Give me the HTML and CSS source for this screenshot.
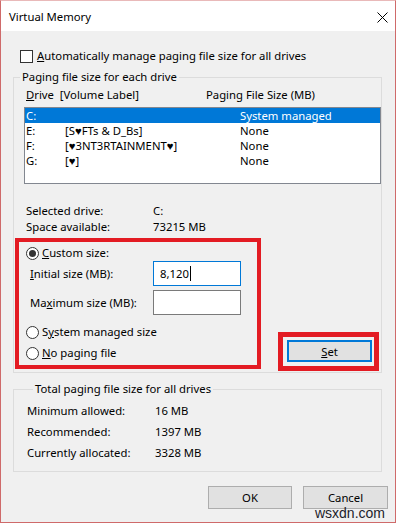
FILE: index.html
```html
<!DOCTYPE html>
<html>
<head>
<meta charset="UTF-8">
<title>Virtual Memory</title>
<link rel="stylesheet" href="styles.css">
</head>
<body>
<div class="window">
  <div class="titlebar">
    <span class="title">Virtual Memory</span>
    <svg class="close" width="11" height="11" viewBox="0 0 11 11">
      <path d="M0.5 0.5 L10.5 10.5 M10.5 0.5 L0.5 10.5" stroke="#000" stroke-width="1"/>
    </svg>
  </div>

  <div class="content">
    <div class="auto-row">
      <span class="checkbox"></span>
      <span><u>A</u>utomatically manage paging file size for all drives</span>
    </div>

    <fieldset class="group group-drives">
      <legend>Paging file size for each drive</legend>
      <div class="list-head">
        <span class="col-drive"><u>D</u>rive&nbsp; [Volume Label]</span>
        <span class="col-size">Paging File Size (MB)</span>
      </div>
      <div class="listbox">
        <div class="list-row selected"><span class="c1">C:</span><span class="c3">System managed</span></div>
        <div class="list-row"><span class="c1">E:</span><span class="c2">[S♥FTs &amp; D_Bs]</span><span class="c3">None</span></div>
        <div class="list-row"><span class="c1">F:</span><span class="c2">[♥3NT3RTAINMENT♥]</span><span class="c3">None</span></div>
        <div class="list-row"><span class="c1">G:</span><span class="c2">[♥]</span><span class="c3">None</span></div>
      </div>

      <div class="info">
        <div class="info-row"><span class="info-label">Selected drive:</span><span>C:</span></div>
        <div class="info-row"><span class="info-label">Space available:</span><span>73215 MB</span></div>
      </div>

      <div class="size-area">
        <div class="mark mark-sizes">
          <div class="radio-row"><span class="radio checked"></span><span><u>C</u>ustom size:</span></div>
          <div class="field-row">
            <span class="field-label"><u>I</u>nitial size (MB):</span>
            <span class="textbox focused">8,120<span class="caret"></span></span>
          </div>
          <div class="field-row">
            <span class="field-label">Ma<u>x</u>imum size (MB):</span>
            <span class="textbox"></span>
          </div>
          <div class="radio-row spaced"><span class="radio"></span><span>S<u>y</u>stem managed size</span></div>
          <div class="radio-row last"><span class="radio"></span><span><u>N</u>o paging file</span></div>
        </div>
        <div class="mark mark-set">
          <button class="btn btn-default"><u>S</u>et</button>
        </div>
      </div>
    </fieldset>

    <fieldset class="group group-total">
      <legend>Total paging file size for all drives</legend>
      <div class="total-row"><span class="total-label">Minimum allowed:</span><span>16 MB</span></div>
      <div class="total-row"><span class="total-label">Recommended:</span><span>1397 MB</span></div>
      <div class="total-row"><span class="total-label">Currently allocated:</span><span>3328 MB</span></div>
    </fieldset>

    <div class="actions">
      <button class="btn btn-ok">OK</button>
      <button class="btn btn-cancel">Cancel</button>
    </div>
  </div>

  <span class="watermark">wsxdn.com</span>
</div>
</body>
</html>
```

FILE: styles.css
```css
html, body {
  margin: 0;
  padding: 0;
  background: #ffffff;
}

body {
  font-family: "Noto Sans", "Open Sans", sans-serif;
  font-size: 11.3px;
  color: #000000;
}

.window {
  position: relative;
  box-sizing: border-box;
  width: 396px;
  height: 523px;
  border: 1px solid #cf6a6a;
  border-top-color: #e9b9b9;
  background: #f0f0f0;
  display: flex;
  flex-direction: column;
  overflow: hidden;
}

.titlebar {
  height: 30px;
  background: #ffffff;
  display: flex;
  align-items: center;
  justify-content: space-between;
  padding: 0 7px 0 8px;
  flex-shrink: 0;
}

.title {
  line-height: 16px;
  padding-top: 1px;
}

.close {
  margin-top: 2px;
}

.content {
  padding: 0 10px 0 12px;
  display: flex;
  flex-direction: column;
}

u {
  text-decoration: underline;
  text-underline-offset: 1px;
}

/* checkbox row */
.auto-row {
  display: flex;
  align-items: center;
  margin-top: 18px;
  height: 14px;
  padding-left: 7px;
  line-height: 14px;
}

.checkbox {
  width: 11px;
  height: 11px;
  border: 1px solid #333333;
  background: #ffffff;
  margin-right: 4px;
}

/* group boxes */
.group {
  margin: 0;
  padding: 0;
  border: 1px solid #dcdcdc;
  min-width: 0;
}

.group legend {
  margin-left: 6px;
  padding: 0 2px;
  line-height: 16px;
}

.group-drives {
  margin-top: 6px;
  width: 369px;
  box-sizing: border-box;
  padding-bottom: 1px;
}

.list-head {
  display: flex;
  margin-top: 2px;
  line-height: 16px;
  padding-left: 12px;
}

.col-drive {
  width: 180px;
}

.listbox {
  margin: 4px 0 0 10px;
  height: 75px;
  border: 1px solid #828790;
  background: #ffffff;
}

.list-row {
  display: flex;
  height: 15px;
  line-height: 15px;
  padding-left: 1px;
}

.list-row.selected {
  background: #0078d7;
  color: #ffffff;
}

.c1 {
  width: 39px;
  flex-shrink: 0;
}

.c2 {
  width: 175px;
  flex-shrink: 0;
}

.selected .c3 {
  margin-left: 175px;
}

.info {
  margin-top: 19px;
  padding-left: 12px;
}

.info-row {
  display: flex;
  line-height: 16px;
}

.info-label {
  width: 127px;
}

/* highlighted area */
.size-area {
  display: flex;
  align-items: flex-start;
  margin-top: 3px;
}

.mark {
  border: 4px solid #e31b23;
  box-sizing: border-box;
}

.mark-sizes {
  width: 246px;
  height: 131px;
  margin-left: 1px;
  padding: 3px 0 0 7px;
}

.mark-set {
  width: 101px;
  height: 39px;
  margin: 94px 0 0 17px;
  border-width: 5px;
  padding: 3px 0 0 4px;
}

.radio-row {
  display: flex;
  align-items: center;
  height: 16px;
  line-height: 16px;
}

.radio-row.spaced {
  margin-top: 9px;
}

.radio-row.last {
  margin-top: 5px;
}

.radio {
  box-sizing: border-box;
  width: 13px;
  height: 13px;
  border: 1px solid #333333;
  border-radius: 50%;
  background: #ffffff;
  margin-right: 3px;
  position: relative;
}

.radio.checked::after {
  content: "";
  position: absolute;
  left: 2px;
  top: 2px;
  width: 7px;
  height: 7px;
  border-radius: 50%;
  background: #333333;
}

.field-row {
  display: flex;
  align-items: center;
  height: 25px;
  margin-bottom: 4px;
}

.field-label {
  width: 123px;
  padding-left: 4px;
}

.textbox {
  box-sizing: border-box;
  width: 88px;
  height: 25px;
  border: 1px solid #7a7a7a;
  background: #ffffff;
  padding-left: 6px;
  line-height: 23px;
  display: flex;
  align-items: center;
}

.textbox.focused {
  border-color: #0078d7;
}

.caret {
  width: 1px;
  height: 15px;
  background: #000000;
  margin-left: 1px;
}

/* buttons */
.btn {
  font-family: inherit;
  font-size: 11.3px;
  color: #000000;
  background: #e1e1e1;
  border: 1px solid #adadad;
  box-sizing: border-box;
  height: 23px;
  padding: 0;
  line-height: 20px;
}

.btn-default {
  width: 85px;
  height: 22px;
  border: 2px solid #0078d7;
}

.group-total {
  margin-top: 8px;
  width: 369px;
  box-sizing: border-box;
  padding: 3px 0 8px 13px;
}

.total-row {
  display: flex;
  line-height: 21px;
}

.total-label {
  width: 128px;
}

.actions {
  display: flex;
  justify-content: flex-end;
  gap: 11px;
  margin-top: 14px;
  margin-right: -3px;
}

.btn-ok {
  width: 84px;
}

.btn-cancel {
  width: 85px;
}

.watermark {
  position: absolute;
  right: 10px;
  bottom: 1px;
  font-family: "Liberation Sans", sans-serif;
  font-size: 14px;
  color: #1d1d2b;
  line-height: 16px;
}
```
